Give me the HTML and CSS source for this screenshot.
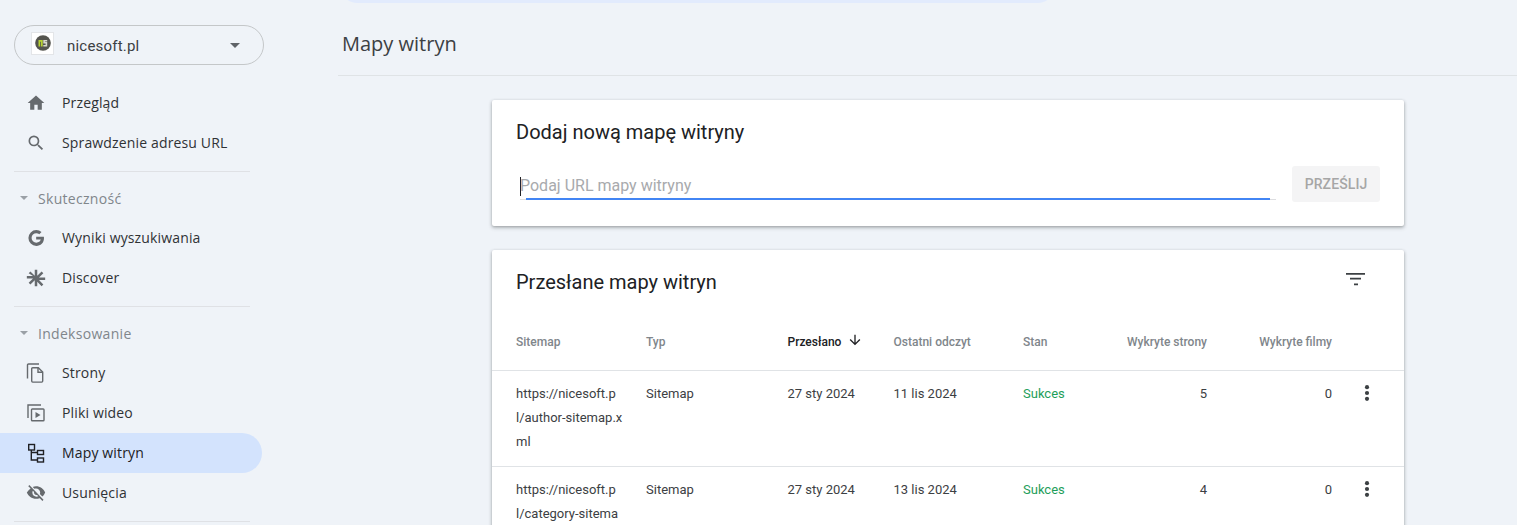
FILE: index.html
```html
<!DOCTYPE html>
<html lang="pl">
<head>
<meta charset="utf-8">
<title>Mapy witryn</title>
<link rel="stylesheet" href="styles.css">
</head>
<body>
<div class="app">
  <aside class="sidebar">
    <div class="property">
      <span class="favicon">
        <svg width="16" height="16" viewBox="0 0 16 16"><circle cx="8" cy="8" r="7.8" fill="#54544e"/><path d="M3.500 11.500V5h4.200v6.500H6V6.800H5.200v4.700z" fill="#b8d233"/><path d="M8.300 5h3.900v1.500H9.900v.6h2.300v4.400H8.300V10h2.300v-1.400H8.300z" fill="#d8d8cc"/></svg>
      </span>
      <span class="property-name">nicesoft.pl</span>
      <span class="caret-big"></span>
    </div>
    <nav class="nav">
      <a class="nav-item">
        <svg class="ico" viewBox="0 0 24 24"><path d="M10 20v-6h4v6h5v-8h3L12 3 2 12h3v8z"/></svg>
        <span>Przegląd</span>
      </a>
      <a class="nav-item">
        <svg class="ico" viewBox="0 0 24 24"><path d="M15.500 14h-.79l-.28-.27A6.470 6.470 0 0 0 16 9.500 6.500 6.500 0 1 0 9.500 16c1.610 0 3.090-.59 4.230-1.570l.27.28v.79l5 4.990L20.490 19l-4.990-5zm-6 0C7.010 14 5 11.990 5 9.500S7.010 5 9.500 5 14 7.010 14 9.500 11.990 14 9.500 14z"/></svg>
        <span>Sprawdzenie adresu URL</span>
      </a>
      <hr class="sep">
      <div class="section"><span class="caret-small"></span><span>Skuteczność</span></div>
      <a class="nav-item">
        <svg class="ico" viewBox="0 0 24 24"><path d="M12.200 10.400v3.500h5.500c-.5 2.300-2.500 3.700-5.300 3.700a5.700 5.700 0 0 1 0-11.400c1.400 0 2.600.5 3.600 1.300l2.600-2.600A9.400 9.400 0 0 0 12.400 2.500a9.500 9.500 0 1 0 0 19c5.200 0 9.200-3.600 9.200-9.500 0-.5-.1-1.100-.2-1.600z"/></svg>
        <span>Wyniki wyszukiwania</span>
      </a>
      <a class="nav-item">
        <svg class="ico" viewBox="0 0 24 24"><path d="M10.500 2h3v7.400l5.200-5.200 2.100 2.100-5.200 5.200H23v3h-7.400l5.200 5.200-2.100 2.100-5.200-5.200V22h-3v-7.400l-5.200 5.200-2.100-2.100 5.200-5.200H1v-3h7.400L3.200 6.300l2.100-2.100 5.200 5.200z"/></svg>
        <span>Discover</span>
      </a>
      <hr class="sep">
      <div class="section"><span class="caret-small"></span><span>Indeksowanie</span></div>
      <a class="nav-item">
        <svg class="ico line" viewBox="0 0 20 20"><path d="M13 1H2.500a1 1 0 0 0-1 1v13.500"/><path d="M5.700 5.700a1 1 0 0 1 1-1h5.600l4.400 4.400v9a1 1 0 0 1-1 1H6.700a1 1 0 0 1-1-1z"/><path d="M12 4.700v4.600h4.700"/></svg>
        <span>Strony</span>
      </a>
      <a class="nav-item">
        <svg class="ico line" viewBox="0 0 20 20"><path d="M15 2H2v13"/><rect x="5.500" y="6" width="12.500" height="11.700" rx=".8"/><path class="solid" d="M9.500 9l5 3-5 3z"/></svg>
        <span>Pliki wideo</span>
      </a>
      <a class="nav-item active">
        <svg class="ico line" viewBox="0 0 20 20"><rect x="2.700" y="1.500" width="5.800" height="5.500"/><path d="M5.300 7v10H11M5.300 9.500H11"/><rect x="11.500" y="7.500" width="6" height="4"/><rect x="11.500" y="15" width="6" height="4"/></svg>
        <span>Mapy witryn</span>
      </a>
      <a class="nav-item">
        <svg class="ico" viewBox="0 0 24 24"><path d="M12 6.500c2.800 0 5 2.200 5 5 0 .6-.1 1.200-.4 1.800l3 3c1.500-1.300 2.700-3 3.400-4.800-1.700-4.400-6-7.500-11-7.500-1.400 0-2.700.3-4 .7l2.200 2.200c.6-.3 1.200-.4 1.800-.4zM2.700 3.800l2.300 2.300.5.400C3.800 7.800 2.500 9.500 1 11.500c1.700 4.400 6 7.500 11 7.500 1.500 0 3-.3 4.400-.8l.4.4 2.900 2.900 1.300-1.300L4 2.500zm5.500 5.500 1.500 1.500c0 .2-.1.500-.1.700 0 1.700 1.300 3 3 3 .2 0 .5 0 .7-.1l1.500 1.500c-.7.3-1.400.6-2.200.6-2.800 0-5-2.200-5-5 0-.8.200-1.500.6-2.200z"/></svg>
        <span>Usunięcia</span>
      </a>
      <hr class="sep">
    </nav>
  </aside>
  <main class="main">
    <div class="banner-row"><div class="banner"></div></div>
    <header class="page-head"><h1>Mapy witryn</h1></header>
    <div class="content">
      <section class="card add-card">
        <h2>Dodaj nową mapę witryny</h2>
        <div class="add-row">
          <div class="field">
            <span class="cursor"></span>
            <span class="placeholder">Podaj URL mapy witryny</span>
          </div>
          <button class="submit" type="button">PRZEŚLIJ</button>
        </div>
      </section>
      <section class="card list-card">
        <div class="list-head">
          <h2>Przesłane mapy witryn</h2>
          <svg class="filter" viewBox="0 0 24 24"><path d="M3 6h19v1.800H3zM7 10.700h11v1.800H7zM11 16.400h4v1.800h-4z"/></svg>
        </div>
        <div class="row head">
          <div>Sitemap</div>
          <div>Typ</div>
          <div class="sorted">Przesłano
            <svg class="arrow" viewBox="0 0 24 24"><path d="M20 12l-1.400-1.400-5.600 5.600V4h-2v12.200l-5.600-5.600L4 12l8 8z"/></svg>
          </div>
          <div>Ostatni odczyt</div>
          <div>Stan</div>
          <div class="num">Wykryte strony</div>
          <div class="num">Wykryte filmy</div>
          <div></div>
        </div>
        <div class="row">
          <div class="url">https://nicesoft.pl/author-sitemap.xml</div>
          <div>Sitemap</div>
          <div>27 sty 2024</div>
          <div>11 lis 2024</div>
          <div class="ok">Sukces</div>
          <div class="num">5</div>
          <div class="num">0</div>
          <div class="more"><svg viewBox="0 0 24 24"><circle cx="12" cy="5" r="2.500"/><circle cx="12" cy="12" r="2.500"/><circle cx="12" cy="19" r="2.500"/></svg></div>
        </div>
        <div class="row">
          <div class="url">https://nicesoft.pl/category-sitemap.xml</div>
          <div>Sitemap</div>
          <div>27 sty 2024</div>
          <div>13 lis 2024</div>
          <div class="ok">Sukces</div>
          <div class="num">4</div>
          <div class="num">0</div>
          <div class="more"><svg viewBox="0 0 24 24"><circle cx="12" cy="5" r="2.500"/><circle cx="12" cy="12" r="2.500"/><circle cx="12" cy="19" r="2.500"/></svg></div>
        </div>
      </section>
    </div>
  </main>
</div>
</body>
</html>
```
FILE: styles.css
```css
* { box-sizing: border-box; }
html, body { margin: 0; height: 525px; overflow: hidden; }
body { background: #eff3f8; font-family: Roboto, "Liberation Sans", sans-serif; color: #202124; }
.app { display: flex; height: 525px; overflow: hidden; }

.sidebar { width: 338px; flex: none; padding-top: 25px; }
.property { width: 250px; height: 40px; margin-left: 14px; border: 1px solid #c4c7c9; border-radius: 20px; display: flex; align-items: center; padding-left: 16px; }
.favicon { width: 23px; height: 23px; background: #fff; border: 1px solid #e3e5e8; display: flex; align-items: center; justify-content: center; margin-bottom: 4px; }
.property-name { margin: 2px 0 0 13px; font-size: 15px; color: #3c4043; letter-spacing: .2px; flex: 1; }
.caret-big { width: 0; height: 0; border-left: 5px solid transparent; border-right: 5px solid transparent; border-top: 5px solid #5f6368; margin-right: 23px; }

.nav { margin-top: 18px; font-family: "Open Sans", Roboto, sans-serif; }
.nav-item { display: flex; align-items: center; width: 262px; height: 40px; padding-left: 26px; border-radius: 0 20px 20px 0; font-size: 14px; font-weight: 500; letter-spacing: .15px; color: #2f3235; }
.nav-item span { margin: 0 0 2px 16px; }
.nav-item.active { background: #d3e3fd; color: #202124; }
.ico { width: 20px; height: 20px; fill: #666a6e; flex: none; }
.ico.line { fill: none; stroke: #666a6e; stroke-width: 1.4; }
.ico.line .solid { fill: #666a6e; stroke: none; }
.active .ico.line { stroke: #202124; }
.sep { width: 236px; height: 1px; margin: 8px 0 6px 14px; border: 0; background: #dfe1e5; }
.section { display: flex; align-items: center; height: 40px; padding-left: 20px; font-size: 14px; font-weight: 500; letter-spacing: .3px; color: #80868b; }
.caret-small { width: 0; height: 0; border-left: 4px solid transparent; border-right: 4px solid transparent; border-top: 4px solid #9aa0a6; margin-right: 10px; }

.main { flex: 1; min-width: 0; }
.banner-row { height: 3px; overflow: hidden; }
.banner { width: 719px; height: 40px; margin-top: -37px; background: #e2ebfd; border-radius: 20px; }
.page-head { height: 73px; border-bottom: 1px solid #dfe3e6; padding: 28px 0 0 4px; }
h1 { margin: 0; font-family: "Open Sans", Roboto, sans-serif; font-size: 20px; line-height: 26px; font-weight: 400; color: #3c4043; }
.content { width: 912px; margin: 24px 0 0 154px; display: flex; flex-direction: column; gap: 24px; }
.card { background: #fff; border-radius: 2px; box-shadow: 0 1px 3px rgba(60,64,67,.35), 0 2px 4px rgba(60,64,67,.2); }
.add-card { height: 126px; padding: 19px 24px 0; }
h2 { margin: 0; font-size: 20px; line-height: 26px; font-weight: 400; color: #202124; }
.add-row { display: flex; align-items: flex-start; margin-top: 21px; }
.field { width: 756px; height: 34px; position: relative; border-bottom: 1px solid #dcdde0; margin-left: 4px; }
.field::after { content: ""; position: absolute; left: 6px; right: 6px; bottom: -1px; height: 2px; background: #4285f4; }
.cursor { position: absolute; left: 0; top: 11px; width: 1px; height: 19px; background: #202124; }
.placeholder { position: absolute; left: 0; top: 9px; font-size: 16px; line-height: 22px; color: #a8aaad; }
.submit { width: 88px; height: 36px; margin-left: 16px; border: 0; border-radius: 3px; background: #f4f4f5; color: #a6a6a6; font: 500 14px Roboto, sans-serif; letter-spacing: .1px; padding: 0; }
.list-card { height: 300px; }
.list-head { height: 72px; padding: 19px 24px 0; display: flex; justify-content: space-between; }
.filter { width: 24px; height: 24px; margin: -2px 13px 0 0; fill: #3c4043; }

.row { display: grid; grid-template-columns: 130px 141.5px 106px 129.5px 82px 102px 125px 1fr; padding: 11px 0 0 24px; border-top: 1px solid #e0e3e6; height: 96px; font-size: 13px; line-height: 24px; color: #3c4043; }
.row > div { min-width: 0; }
.row.head { border-top: 0; height: 48px; padding-top: 0; font-size: 12px; font-weight: 500; color: #80868b; line-height: 40px; align-items: start; }
.row.head .sorted { color: #202124; display: flex; align-items: center; height: 40px; }
.arrow { width: 16px; height: 16px; margin-left: 6px; fill: #202124; margin-top: -4px; }
.url { width: 107px; word-break: break-all; }
.ok { color: #1e9e5a; }
.num { text-align: right; }
.more { padding-left: 25px; }
.more svg { display: block; width: 20px; height: 20px; fill: #3c4043; margin-top: 1px; }
```
